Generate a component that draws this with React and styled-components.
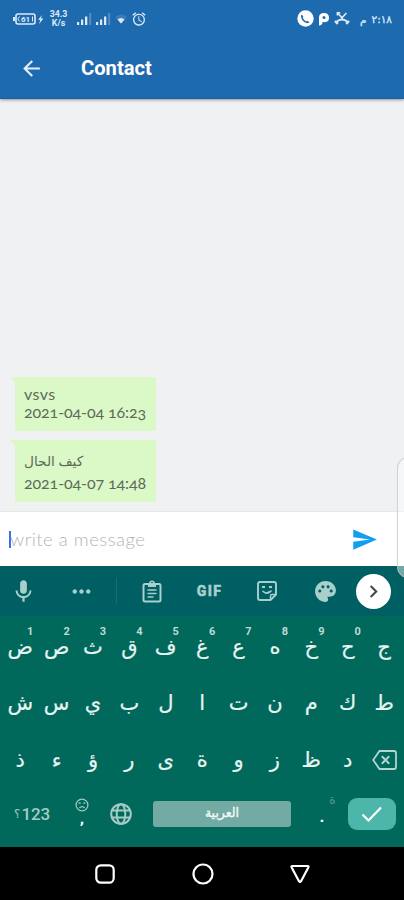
import React from 'react';
import styled, { createGlobalStyle } from 'styled-components';
import {
    MdArrowBack, MdMic, MdSend, MdPalette, MdMoreHoriz, MdChevronRight, MdAlarm
} from 'react-icons/md';

const GlobalStyle = createGlobalStyle`
    * {
        box-sizing: border-box;
    }
    body {
        margin: 0;
        background-color: #000;
    }
`

const Screen = styled.div`
    position: relative;
    display: flex;
    flex-direction: column;
    width: 404px;
    height: 900px;
    overflow: hidden;
    font-family: Roboto, "DejaVu Sans", sans-serif;
    svg {
        display: block;
        flex-shrink: 0;
    }
`

const Header = styled.header`
    position: relative;
    height: 99px;
    margin-bottom: -1px;
    background-color: #1e6aaf;
    color: #fff;
    border-bottom: 1px solid #1663a5;
    box-shadow: 0 1px 3px rgba(0, 0, 0, 0.4);
`

const StatusBar = styled.div`
    display: flex;
    justify-content: space-between;
    height: 37px;
    padding: 0 12px 0 13px;
    color: #dceaf8;
`

const StatusGroup = styled.div`
    display: flex;
    align-items: center;
    height: 37px;
    gap: ${props => props.$gap}px;
`

const Speed = styled.div`
    width: 19px;
    margin: 0 5px 0 0;
    font-size: 8.8px;
    font-weight: 700;
    line-height: 9px;
    text-align: center;
`

const Clock = styled.div`
    margin-left: 6px;
    width: 32px;
    direction: rtl;
    font: 10.5px/14px "DejaVu Sans", sans-serif;
    -webkit-text-stroke: 0.3px currentColor;
    white-space: nowrap;
    display: flex;
    justify-content: space-between;
`

const AppBar = styled.div`
    display: flex;
    align-items: center;
    height: 62px;
    padding-left: 19px;
    svg {
        color: #e4effa;
    }
`

const Title = styled.h1`
    margin: 0 0 0 37px;
    font-size: 20.2px;
    font-weight: 700;
    letter-spacing: 0;
    line-height: 24px;
`

const Chat = styled.main`
    display: flex;
    flex-direction: column;
    align-items: flex-start;
    justify-content: flex-end;
    gap: 9px;
    height: 414px;
    padding: 0 0 9px 15px;
    background-color: #eff1f3;
    border-bottom: 1px solid #e5e7e9;
`

const Bubble = styled.div`
    position: relative;
    width: 141px;
    height: ${props => props.$height}px;
    padding: 9px 0 0 9px;
    background-color: #dbf8c7;
    color: #5b6b57;
    font: 15.5px/18px Lato, "DejaVu Sans", sans-serif;
    &::before {
        content: '';
        position: absolute;
        top: 0;
        left: -5px;
        border-top: 5px solid #dbf8c7;
        border-left: 5px solid transparent;
    }
`

const MessageText = styled.div`
    height: ${props => props.$arabic ? 26 : 18}px;
    font-size: ${props => props.$arabic ? 13.7 : 16}px;
    line-height: ${props => props.$arabic ? 23 : 16}px;
    letter-spacing: ${props => props.$arabic ? 0 : 0.4}px;
`

const Stamp = styled.div`
    margin-top: -1px;
    white-space: nowrap;
    font-size: 16px;
    font-variant-numeric: oldstyle-nums;
    letter-spacing: -0.1px;
`

const Composer = styled.div`
    display: flex;
    align-items: center;
    justify-content: space-between;
    height: 54px;
    padding: 0 26px 0 9px;
    background-color: #fff;
`

const Placeholder = styled.div`
    display: flex;
    align-items: center;
    color: #b3b4b6;
    font: 300 18.5px/22px Lato, sans-serif;
    letter-spacing: 0.5px;
`

const Caret = styled.span`
    width: 2px;
    height: 17px;
    margin-right: -1px;
    background-color: #3971f2;
`

const Tools = styled.div`
    display: flex;
    align-items: center;
    height: 50px;
    padding-left: 0;
    background-color: #005f62;
    color: #a9cfcd;
`

const Tool = styled.div`
    display: flex;
    align-items: center;
    justify-content: center;
    width: ${props => props.$width}px;
    height: 50px;
    font: 800 14px/16px Roboto, sans-serif;
    letter-spacing: 1.4px;
    -webkit-text-stroke: 0.5px currentColor;
`

const Divider = styled.div`
    width: 1px;
    height: 26px;
    background-color: #176e70;
`

const More = styled.div`
    display: flex;
    align-items: center;
    justify-content: center;
    width: 35px;
    height: 35px;
    margin-left: 8px;
    border-radius: 50%;
    background-color: #fff;
    color: #424949;
`

const Keyboard = styled.div`
    height: 231px;
    background-color: #00695c;
    color: #e8f4f2;
`

const KeyRow = styled.div`
    display: grid;
    grid-template-columns: repeat(11, 36.4px);
    height: ${props => props.$height}px;
    padding: ${props => props.$top}px 0 0 2px;
`

const Key = styled.div`
    position: relative;
    height: 40px;
    text-align: center;
    font: 21px/40px "DejaVu Sans", sans-serif;
    -webkit-text-stroke: 0.2px currentColor;
`

const Hint = styled.span`
    position: absolute;
    top: -1px;
    left: 25px;
    color: #bddad6;
    font: 700 11px/12px Roboto, sans-serif;
    -webkit-text-stroke: 0;
`

const Backspace = styled.div`
    display: flex;
    align-items: center;
    justify-content: center;
    height: 40px;
`

const BottomRow = styled.div`
    display: flex;
    align-items: center;
    height: 48px;
    padding: 0 8px 0 14px;
    color: #a5cbc5;
`

const Symbols = styled.div`
    display: flex;
    align-items: center;
    width: 37px;
    white-space: nowrap;
    font: 500 17px/20px Roboto, "DejaVu Sans", sans-serif;
    letter-spacing: -0.1px;
    span {
        font: 12px/20px "DejaVu Sans", sans-serif;
        margin-right: 1px;
    }
`

const Comma = styled.div`
    display: flex;
    flex-direction: column;
    align-items: center;
    width: 14px;
    height: 32px;
    margin: 0 21px 0 24px;
    span {
        color: #fff;
        font: 700 12px/16px "DejaVu Sans", sans-serif;
    }
`

const SpaceBar = styled.div`
    width: 138px;
    height: 26px;
    margin-left: 21px;
    border-radius: 3px;
    background-color: #73aaa3;
    color: #f2faf8;
    font: 12.5px/24px "DejaVu Sans", sans-serif;
    -webkit-text-stroke: 0.35px currentColor;
    text-align: center;
`

const Period = styled.div`
    position: relative;
    width: 57px;
    height: 32px;
    color: #fff;
    font: 700 17px/36px Roboto, sans-serif;
    text-align: center;
    padding-left: 5px;
`

const Mark = styled.span`
    position: absolute;
    top: -5px;
    left: 38px;
    color: #4f978e;
    font: 13px/14px "DejaVu Sans", sans-serif;
`

const Enter = styled.div`
    display: flex;
    align-items: center;
    justify-content: center;
    width: 48px;
    height: 32px;
    border-radius: 9px;
    background-color: #4cb6aa;
`

const NavBar = styled.nav`
    display: flex;
    align-items: center;
    justify-content: center;
    gap: 75.5px;
    height: 53px;
    padding-left: 1px;
    background-color: #000;
`

const EdgePanel = styled.div`
    position: absolute;
    top: 457px;
    left: 397px;
    width: 22px;
    height: 121px;
    border: 1px solid rgba(190, 195, 197, 0.7);
    border-radius: 12px;
    background-color: rgba(255, 255, 255, 0.45);
`

const topKeys = ['ض', 'ص', 'ث', 'ق', 'ف', 'غ', 'ع', 'ه', 'خ', 'ح', 'ج'];
const middleKeys = ['ش', 'س', 'ي', 'ب', 'ل', 'ا', 'ت', 'ن', 'م', 'ك', 'ط'];
const bottomKeys = ['ذ', 'ء', 'ؤ', 'ر', 'ى', 'ة', 'و', 'ز', 'ظ', 'د'];
const hints = '1234567890';

const BatteryIcon = () => (
    <svg width="32" height="12" viewBox="0 0 32 12" fill="none" stroke="currentColor">
        <rect x="3" y="1" width="19" height="10" rx="2" strokeWidth="1.6" />
        <path d="M1 4v4" strokeWidth="2" />
        <path d="M6.5 3.5L4.8 6l1.7 2.5M19.5 3.5v5" />
        <text x="8" y="9" fill="currentColor" stroke="none" fontSize="8" fontWeight="700">61</text>
        <path d="M29 2l-4 4.7h2.4L26 11l4.5-5.6h-2.6z" fill="currentColor" stroke="none" />
    </svg>
)

const SignalIcon = () => (
    <svg width="15" height="12" viewBox="0 0 15 12" fill="currentColor">
        <path d="M0 9h2.2v3H0zM4 6.5h2.2V12H4zM8 3.5h2.3V12H8z" />
        <path d="M12.2 0h2V12h-2z" opacity="0.28" />
    </svg>
)

const WifiIcon = () => (
    <svg width="12" height="10" viewBox="0 0 12 10" fill="currentColor">
        <path d="M0 3q6-5 12 0L6 10z" opacity="0.15" />
        <path d="M2.5 5.6q3.5-3 7 0L6 9.6z" />
    </svg>
)

const PhoneBadgeIcon = () => (
    <svg width="17" height="17" viewBox="0 0 17 17">
        <circle cx="8.5" cy="8.5" r="8.2" fill="#fff" />
        <path d="M5 4.6l1.3 2.2-.6 1q1.2 2.6 3.6 3.6l1-.7 2 1.3q-.9 1.5-2.6 1.1-4.8-1.4-5.7-6.3-.1-1.6 1-2.2z" fill="#1e6aaf" />
    </svg>
)

const ParkingIcon = () => (
    <svg width="12" height="14" viewBox="0 0 12 14">
        <path d="M1 13.5V5.5Q1 1 6 1t5 4.8-5 4.3H4.6Q4.5 13.5 1 13.5z" fill="#fff" />
        <circle cx="6" cy="5.6" r="1.5" fill="#1e6aaf" />
    </svg>
)

const MissedCallIcon = () => (
    <svg width="16" height="13" viewBox="0 0 16 13" fill="none" stroke="currentColor">
        <path d="M3.6 1L8 5.8 12.4 1M3.4 3.6V.8h2.8" strokeWidth="1.6" />
        <path d="M2 10.2Q5 7.6 8 7.6t6 2.6" strokeWidth="2" />
        <path d="M8 5v3" strokeWidth="2" />
        <path d="M1 9l2.8 2.9M15 9l-2.8 2.9" strokeWidth="2.4" />
    </svg>
)

const ClipboardIcon = () => (
    <svg width="20" height="23" viewBox="0 0 20 23" fill="none" stroke="currentColor" strokeWidth="2">
        <rect x="1.5" y="4" width="17" height="17.5" rx="1.5" />
        <path d="M6 5.5h8" strokeWidth="3" />
        <circle cx="10" cy="3.2" r="2" strokeWidth="1.6" />
        <path d="M5.5 10h9M5.5 13.5h9M5.5 17h6" strokeWidth="1.7" />
    </svg>
)

const StickerIcon = () => (
    <svg width="20" height="20" viewBox="0 0 20 20" fill="none" stroke="currentColor" strokeWidth="1.9">
        <path d="M3 1h14q2 0 2 2v10.5L13.5 19H3q-2 0-2-2V3q0-2 2-2z" />
        <path d="M18.8 13.5h-3.6q-1.7 0-1.7 1.7v3.6" strokeWidth="1.5" />
        <path d="M5 6h3M12 6h3" />
        <path d="M5.5 10q4.5 4.5 9-.2L9 12.2z" strokeWidth="1.4" />
    </svg>
)

const BackspaceIcon = () => (
    <svg width="25" height="20" viewBox="0 0 25 20" fill="none" stroke="#b3d4cf" strokeWidth="1.8">
        <path d="M7.5 1H22q2 0 2 2v14q0 2-2 2H7.5L1.2 10z" />
        <path d="M9.8 6.3l7.4 7.4M17.2 6.3l-7.4 7.4" strokeWidth="2" />
    </svg>
)

const FaceIcon = () => (
    <svg width="14" height="14" viewBox="0 0 14 14" fill="none" stroke="currentColor" strokeWidth="1.2">
        <circle cx="7" cy="7" r="5.9" />
        <path d="M3.6 5.2h2.1M8.3 5.2h2.1M4.4 10q2.6-2.6 5.2 0" />
    </svg>
)

const GlobeIcon = () => (
    <svg width="22" height="22" viewBox="0 0 22 22" fill="none" stroke="currentColor" strokeWidth="2">
        <circle cx="11" cy="11" r="9.8" />
        <ellipse cx="11" cy="11" rx="4.3" ry="9.8" />
        <path d="M2 7.5h18M2 14.5h18" />
    </svg>
)

const Keys = ({ letters, numbered = false }) => (
    <React.Fragment>
        {letters.map((letter, i) => (
            <Key key={letter}>
                {letter}
                {numbered && hints[i] ? <Hint>{hints[i]}</Hint> : ''}
            </Key>
        ))}
    </React.Fragment>
)

const App = () => {
    return (
        <Screen lang="ar">
            <GlobalStyle />
            <Header>
                <StatusBar>
                    <StatusGroup $gap={4}>
                        <BatteryIcon />
                        <Speed>34.3<br />K/s</Speed>
                        <SignalIcon />
                        <SignalIcon />
                        <WifiIcon />
                        <MdAlarm size={16} />
                    </StatusGroup>
                    <StatusGroup $gap={4}>
                        <PhoneBadgeIcon />
                        <ParkingIcon />
                        <MissedCallIcon />
                        <Clock><span>٢:١٨</span><span>م</span></Clock>
                    </StatusGroup>
                </StatusBar>
                <AppBar>
                    <MdArrowBack size={25} />
                    <Title>Contact</Title>
                </AppBar>
            </Header>
            <Chat>
                <Bubble $height={54}>
                    <MessageText>vsvs</MessageText>
                    <Stamp>2021-04-04 16:23</Stamp>
                </Bubble>
                <Bubble $height={62}>
                    <MessageText $arabic>كيف الحال</MessageText>
                    <Stamp>2021-04-07 14:48</Stamp>
                </Bubble>
            </Chat>
            <Composer>
                <Placeholder><Caret />write a message</Placeholder>
                <MdSend size={27} color="#119fee" />
            </Composer>
            <Tools>
                <Tool $width={46}><MdMic size={27} /></Tool>
                <Tool $width={70}><MdMoreHoriz size={27} /></Tool>
                <Divider />
                <Tool $width={70}><ClipboardIcon /></Tool>
                <Tool $width={45}>GIF</Tool>
                <Tool $width={70}><StickerIcon /></Tool>
                <Tool $width={46}><MdPalette size={25} /></Tool>
                <More><MdChevronRight size={25} /></More>
            </Tools>
            <Keyboard>
                <KeyRow $height={67} $top={11}>
                    <Keys letters={topKeys} numbered />
                </KeyRow>
                <KeyRow $height={57} $top={0}>
                    <Keys letters={middleKeys} />
                </KeyRow>
                <KeyRow $height={50} $top={0}>
                    <Keys letters={bottomKeys} />
                    <Backspace><BackspaceIcon /></Backspace>
                </KeyRow>
                <BottomRow>
                    <Symbols><span>؟</span>123</Symbols>
                    <Comma><FaceIcon /><span>,</span></Comma>
                    <GlobeIcon />
                    <SpaceBar>العربية</SpaceBar>
                    <Period>.<Mark>ة</Mark></Period>
                    <Enter>
                        <svg width="22" height="16" viewBox="0 0 22 16" fill="none" stroke="#fff" strokeWidth="2.2">
                            <path d="M1.5 8.5l6 6L20 1.5" />
                        </svg>
                    </Enter>
                </BottomRow>
            </Keyboard>
            <NavBar>
                <svg width="22" height="22" viewBox="0 0 22 22" fill="none" stroke="#fff" strokeWidth="2.2">
                    <rect x="2.3" y="2.3" width="17.4" height="17.4" rx="4.5" />
                </svg>
                <svg width="22" height="22" viewBox="0 0 22 22" fill="none" stroke="#fff" strokeWidth="2.2">
                    <circle cx="11" cy="11" r="9.5" />
                </svg>
                <svg width="22" height="22" viewBox="0 0 22 22" fill="none" stroke="#fff" strokeWidth="2.2" strokeLinejoin="round">
                    <path d="M3.5 3h15q1.5 0 .8 1.4l-7.4 14q-.9 1.2-1.8 0l-7.4-14Q2 3 3.5 3z" />
                </svg>
            </NavBar>
            <EdgePanel />
        </Screen>
    )
};

export default App;
